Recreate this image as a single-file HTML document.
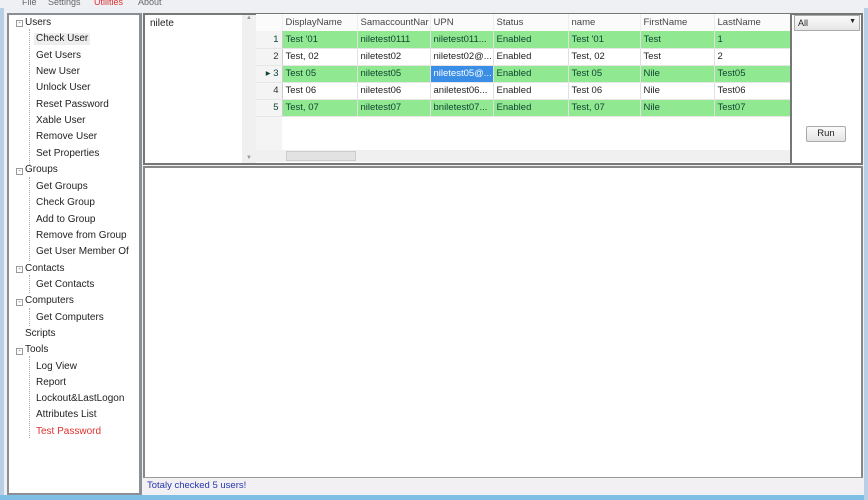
<!DOCTYPE html>
<html><head><meta charset="utf-8"><style>
*{margin:0;padding:0;box-sizing:border-box}
body{width:868px;height:500px;overflow:hidden;background:#eef0f3;font-family:"Liberation Sans",sans-serif;font-size:10px;color:#222;position:relative}
.a{position:absolute}
.menu span{position:absolute;top:-3px;font-size:9px;color:#666}
#left{left:7px;top:13px;width:135px;height:482px;background:#fff;border:2px solid #8a8f96;border-right:3px solid #8a8f96}
.t{position:absolute;white-space:nowrap;font-size:10px;line-height:12px}
.l2{left:27px}
.box{position:absolute;width:7px;height:7px;border:1px solid #999;left:7px;font-size:7px;line-height:5px;text-align:center;color:#555}
.vl{position:absolute;left:20px;border-left:1px dotted #aaa}
#top{left:143px;top:13px;width:720px;height:152px;border:2px solid #777;background:#fff}
table{border-collapse:collapse;position:absolute;left:256px;top:14px;font-size:9.5px;table-layout:fixed;width:534px}
td{height:17px;padding:0 3px;border-right:1px solid #e0e0e0;border-bottom:1px solid #e6e6e6;white-space:nowrap;overflow:hidden}
tr.g td{background:#90e890;color:#143}
tr.w td{background:#fff}
td.rh{background:#f4f4f4!important;text-align:right;color:#333;border-right:1px solid #ccc}
th{height:17px;font-weight:normal;text-align:left;padding:0 3px;color:#444;font-size:9.5px;background:#fbfbfb;border-right:1px solid #eee;overflow:hidden;white-space:nowrap}
</style></head><body>
<div class="menu"><span style="left:22px">File</span><span style="left:48px">Settings</span><span style="left:94px;color:#d33">Utilities</span><span style="left:138px">About</span></div>
<div class="a" style="left:0;top:8px;width:4px;height:492px;background:#b8cfe6"></div>
<div class="a" style="left:0;top:495px;width:868px;height:5px;background:#7fbfe6"></div>
<div class="a" style="left:864px;top:8px;width:4px;height:492px;background:#b8cfe6"></div>

<div id="left" class="a">
<div class="vl" style="top:14px;height:136px"></div>
<div class="vl" style="top:162px;height:84px"></div>
<div class="vl" style="top:260px;height:18px"></div>
<div class="vl" style="top:293px;height:18px"></div>
<div class="vl" style="top:341px;height:82px"></div>
</div>
<div class="a" style="left:9px;top:16px;width:130px;height:480px">
<div class="box" style="top:4px">-</div><div class="t" style="left:16px;top:1px">Users</div>
<div class="t l2" style="top:17px;background:#eee;padding:0 2px;left:25px">Check User</div>
<div class="t l2" style="top:34px">Get Users</div>
<div class="t l2" style="top:50px">New User</div>
<div class="t l2" style="top:66px">Unlock User</div>
<div class="t l2" style="top:83px">Reset Password</div>
<div class="t l2" style="top:99px">Xable User</div>
<div class="t l2" style="top:115px">Remove User</div>
<div class="t l2" style="top:132px">Set Properties</div>
<div class="box" style="top:152px">-</div><div class="t" style="left:16px;top:148px">Groups</div>
<div class="t l2" style="top:165px">Get Groups</div>
<div class="t l2" style="top:181px">Check Group</div>
<div class="t l2" style="top:198px">Add to Group</div>
<div class="t l2" style="top:214px">Remove from Group</div>
<div class="t l2" style="top:230px">Get User Member Of</div>
<div class="box" style="top:250px">-</div><div class="t" style="left:16px;top:247px">Contacts</div>
<div class="t l2" style="top:263px">Get Contacts</div>
<div class="box" style="top:283px">-</div><div class="t" style="left:16px;top:279px">Computers</div>
<div class="t l2" style="top:296px">Get Computers</div>
<div class="t" style="left:16px;top:312px">Scripts</div>
<div class="box" style="top:332px">-</div><div class="t" style="left:16px;top:328px">Tools</div>
<div class="t l2" style="top:345px">Log View</div>
<div class="t l2" style="top:361px">Report</div>
<div class="t l2" style="top:377px">Lockout&amp;LastLogon</div>
<div class="t l2" style="top:393px">Attributes List</div>
<div class="t l2" style="top:410px;color:#e03030">Test Password</div>
</div>

<div id="top" class="a"></div>
<div class="t" style="left:150px;top:18px">nilete</div>
<div class="a" style="left:242px;top:15px;width:14px;height:148px;background:#f0f0f0;font-size:6px;color:#999;text-align:center">▲<div style="position:absolute;bottom:2px;width:14px">▼</div></div>
<table>
<colgroup><col style="width:26px"><col style="width:75px"><col style="width:73px"><col style="width:63px"><col style="width:75px"><col style="width:72px"><col style="width:74px"><col style="width:76px"></colgroup>
<tr><th></th><th>DisplayName</th><th>SamaccountNar</th><th>UPN</th><th>Status</th><th>name</th><th>FirstName</th><th>LastName</th></tr>
<tr class="g"><td class="rh">1</td><td>Test '01</td><td>niletest0111</td><td>niletest011...</td><td>Enabled</td><td>Test '01</td><td>Test</td><td>1</td></tr>
<tr class="w"><td class="rh">2</td><td>Test, 02</td><td>niletest02</td><td>niletest02@...</td><td>Enabled</td><td>Test, 02</td><td>Test</td><td>2</td></tr>
<tr class="g"><td class="rh">▸ 3</td><td>Test 05</td><td>niletest05</td><td style="background:#3a8ee6;color:#fff">niletest05@...</td><td>Enabled</td><td>Test 05</td><td>Nile</td><td>Test05</td></tr>
<tr class="w"><td class="rh">4</td><td>Test 06</td><td>niletest06</td><td>aniletest06...</td><td>Enabled</td><td>Test 06</td><td>Nile</td><td>Test06</td></tr>
<tr class="g"><td class="rh">5</td><td>Test, 07</td><td>niletest07</td><td>bniletest07...</td><td>Enabled</td><td>Test, 07</td><td>Nile</td><td>Test07</td></tr>
</table>
<div class="a" style="left:256px;top:117px;width:26px;height:33px;background:#f4f4f4"></div>
<div class="a" style="left:256px;top:150px;width:534px;height:12px;background:#f0f0f0"><div class="a" style="left:30px;top:1px;width:70px;height:10px;background:#e2e2e2;border:1px solid #ccc"></div></div>
<div class="a" style="left:790px;top:13px;width:2px;height:152px;background:#777"></div>
<div class="a" style="left:794px;top:15px;width:66px;height:16px;border:1px solid #aaa;background:linear-gradient(#fafafa,#e6e6e6);font-size:9px;padding:2px 3px">All<span style="float:right;font-size:7px">▼</span></div>
<div class="a" style="left:806px;top:126px;width:40px;height:16px;border:1px solid #aaa;background:linear-gradient(#fafafa,#e4e4e4);font-size:9.5px;text-align:center;line-height:14px;border-radius:2px">Run</div>

<div class="a" style="left:143px;top:166px;width:720px;height:312px;background:#fff;border:2px solid #888;border-bottom:1px solid #999"></div>
<div class="a" style="left:143px;top:478px;width:720px;height:15px;background:#f2f0f2;font-size:9.5px;color:#2436b0;padding:2px 4px">Totaly checked 5 users!</div>
</body></html>
